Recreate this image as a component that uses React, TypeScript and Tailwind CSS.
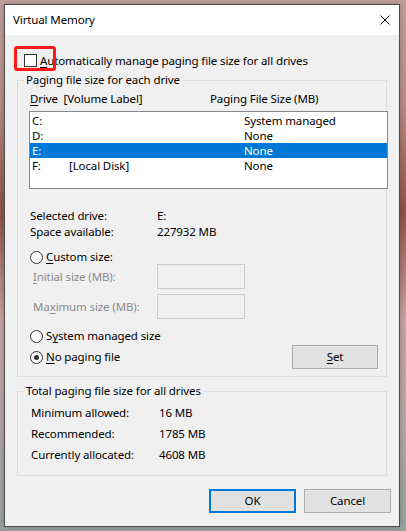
import React from "react";

const U = ({ children }: { children: React.ReactNode }) => (
  <span className="underline underline-offset-[2px] decoration-[1px]">{children}</span>
);

function Radio({ checked }: { checked?: boolean }) {
  return (
    <span className="w-[13px] h-[13px] rounded-full border border-[#333333] bg-white flex items-center justify-center shrink-0">
      {checked && <span className="w-[5px] h-[5px] rounded-full bg-[#333333]" />}
    </span>
  );
}

const rows = [
  { d: "C:", l: "", s: "System managed" },
  { d: "D:", l: "", s: "None" },
  { d: "E:", l: "", s: "None", sel: true },
  { d: "F:", l: "[Local Disk]", s: "None" },
];

export default function App() {
  return (
    <div
      className="min-h-screen w-full pt-[4px] pl-[4px] bg-[linear-gradient(180deg,#c2a09b_0%,#b88d86_20%,#8e5249_40%,#c8a3a2_60%,#b4a7a7_80%,#96a39d_100%)] text-[11.5px] tracking-[-0.12px] text-black leading-[16px]"
      style={{ fontFamily: '"Noto Sans", "Segoe UI", sans-serif' }}
    >
      <div className="relative w-[396px] h-[523px] border border-[#4d4d4d] bg-[#f0f0f0] flex flex-col shadow-[0_0_6px_rgba(0,0,0,0.25)]">
        {/* title bar */}
        <div className="h-[30px] bg-white flex items-center justify-between pl-[8px] pr-[9px]">
          <span>Virtual Memory</span>
          <svg width="10" height="10" viewBox="0 0 10 10">
            <path d="M0.5 0.5 L9.5 9.5 M9.5 0.5 L0.5 9.5" stroke="#000" strokeWidth="1" />
          </svg>
        </div>

        {/* body */}
        <div className="flex flex-col px-[12px]">
          <div className="mt-[19px] h-[13px] flex items-center">
            <span className="ml-[7px] w-[13px] h-[13px] border border-[#333333] bg-white shrink-0" />
            <span className="ml-[3px]">
              <U>A</U>utomatically manage paging file size for all drives
            </span>
          </div>

          {/* group 1 */}
          <fieldset className="mt-[5px] border border-[#dcdcdc] pb-[7px]">
            <legend className="ml-[6px] px-[2px] leading-[16px]">Paging file size for each drive</legend>
            <div className="pl-[11px] flex flex-col">
              <div className="mt-[3px] h-[15px] leading-[15px] flex items-center pl-[1px]">
                <span className="w-[180px]">
                  <U>D</U>rive&nbsp; [Volume Label]
                </span>
                <span>Paging File Size (MB)</span>
              </div>
              <div className="mt-[5px] -mr-[2px] h-[78px] border border-[#828790] bg-white py-[1px]">
                {rows.map((r) => (
                  <div
                    key={r.d}
                    className={
                      "h-[15px] leading-[15px] flex items-center pl-[2px] " +
                      (r.sel ? "bg-[#0078d7] text-white" : "")
                    }
                  >
                    <span className="w-[37px]">{r.d}</span>
                    <span className="w-[175px]">{r.l}</span>
                    <span>{r.s}</span>
                  </div>
                ))}
              </div>

              <div className="mt-[19px] flex pl-[1px]">
                <span className="w-[127px]">Selected drive:</span>
                <span>E:</span>
              </div>
              <div className="flex pl-[1px]">
                <span className="w-[127px]">Space available:</span>
                <span>227932 MB</span>
              </div>

              <div className="mt-[10px] h-[14px] leading-[14px] flex items-center pl-[1px]">
                <Radio />
                <span className="ml-[3px]">
                  <U>C</U>ustom size:
                </span>
              </div>
              <div className="h-[25px] flex items-center pl-[4px]">
                <span className="w-[124px] text-[#8a8a8a]">
                  <U>I</U>nitial size (MB):
                </span>
                <span className="w-[88px] h-[25px] border border-[#cccccc] bg-[#f0f0f0]" />
              </div>
              <div className="mt-[5px] h-[25px] flex items-center pl-[4px]">
                <span className="w-[124px] text-[#8a8a8a]">
                  Ma<U>x</U>imum size (MB):
                </span>
                <span className="w-[88px] h-[25px] border border-[#cccccc] bg-[#f0f0f0]" />
              </div>

              <div className="mt-[10px] h-[14px] leading-[14px] flex items-center pl-[1px]">
                <Radio />
                <span className="ml-[3px]">
                  S<U>y</U>stem managed size
                </span>
              </div>
              <div className="mt-[2px] h-[24px] flex items-center pl-[1px]">
                <Radio checked />
                <span className="ml-[3px]">
                  <U>N</U>o paging file
                </span>
                <button className="ml-auto mr-[8px] w-[86px] h-[24px] border border-[#adadad] bg-[#e1e1e1] flex items-center justify-center">
                  <span>
                    <U>S</U>et
                  </span>
                </button>
              </div>
            </div>
          </fieldset>

          {/* group 2 */}
          <fieldset className="mt-[6px] border border-[#dcdcdc] pb-[10px]">
            <legend className="ml-[6px] px-[2px] leading-[16px]">Total paging file size for all drives</legend>
            <div className="mt-[3px] pl-[13px] flex flex-col">
              <div className="h-[21px] flex items-center">
                <span className="w-[128px]">Minimum allowed:</span>
                <span>16 MB</span>
              </div>
              <div className="h-[21px] flex items-center">
                <span className="w-[128px]">Recommended:</span>
                <span>1785 MB</span>
              </div>
              <div className="h-[21px] flex items-center">
                <span className="w-[128px]">Currently allocated:</span>
                <span>4608 MB</span>
              </div>
            </div>
          </fieldset>

          <div className="mt-[13px] -mr-[4px] flex justify-end gap-[8px]">
            <button className="w-[87px] h-[24px] border-2 border-[#0078d7] bg-[#e1e1e1] flex items-center justify-center">
              OK
            </button>
            <button className="w-[87px] h-[24px] border border-[#adadad] bg-[#e1e1e1] flex items-center justify-center">
              Cancel
            </button>
          </div>
        </div>

        {/* red annotation highlight */}
        <div className="absolute left-[9px] top-[41px] w-[42px] h-[25px] border-[3px] border-[#ff1a1a] rounded-[3px]" />
      </div>
    </div>
  );
}
